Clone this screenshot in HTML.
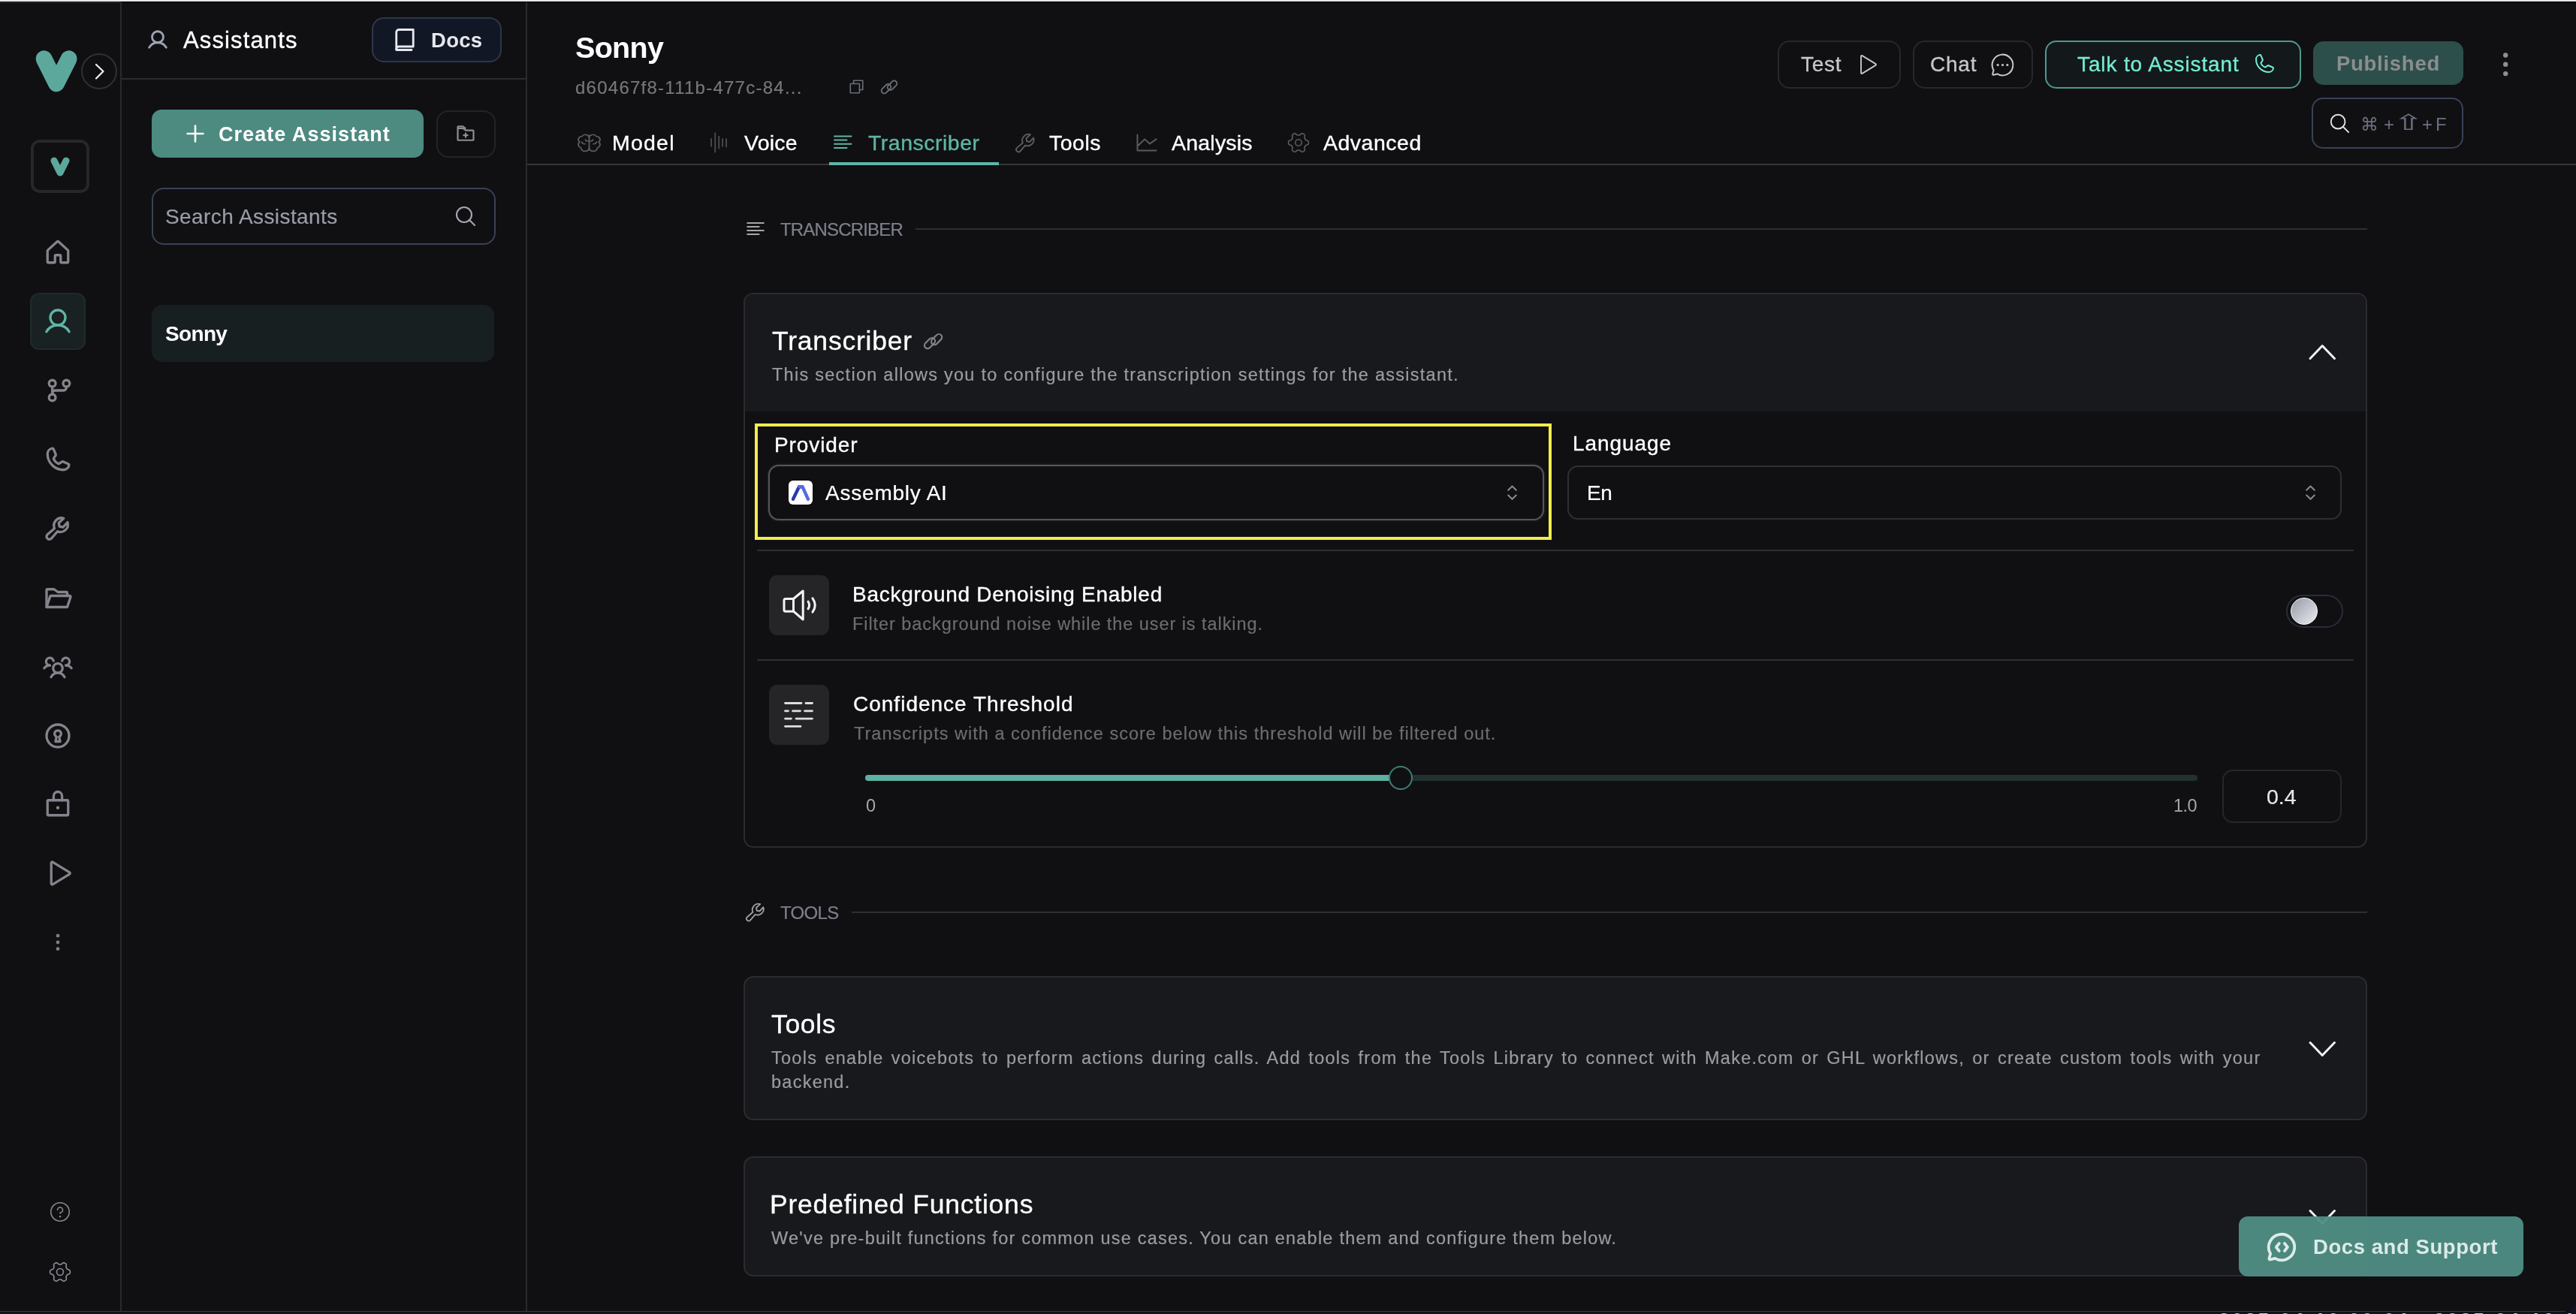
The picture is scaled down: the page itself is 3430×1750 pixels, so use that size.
<!DOCTYPE html>
<html lang="en">
<head>
<meta charset="utf-8">
<title>Sonny - Assistants</title>
<style>
*{box-sizing:border-box;margin:0;padding:0}
html,body{width:3430px;height:1750px;overflow:hidden;background:#101013}
body{position:relative;font-family:"Liberation Sans","DejaVu Sans",sans-serif;color:#fff;-webkit-font-smoothing:antialiased}
.abs{position:absolute}
.t{position:absolute;white-space:nowrap;line-height:1;will-change:transform}
.ic{position:absolute;fill:none;stroke:currentColor;stroke-width:16;stroke-linecap:round;stroke-linejoin:round;overflow:visible}
.ln{position:absolute;background:#29292d}
.card{position:absolute;border:2px solid #2c2c30;border-radius:13px;background:#18191c;overflow:hidden}
</style>
</head>
<body>
<!-- window top edge -->
<div class="abs" style="left:0;top:0;width:3430px;height:2px;background:#e6e8e5"></div>
<div class="abs" style="left:162px;top:2px;width:3268px;height:1px;background:#020203"></div>
<div class="abs" style="left:0;top:2px;width:160px;height:1px;background:#1e1e20"></div>
<div class="abs" style="left:0;top:3px;width:160px;height:1px;background:#262628"></div>
<!-- ============ LEFT RAIL ============ -->
<div class="ln" style="left:160px;top:3px;width:2px;height:1744px;background:#2a2a2c"></div>
<!-- logo -->
<svg class="abs" style="left:40px;top:60px" width="70" height="70" viewBox="0 0 70 70"><polyline points="18.6,18.4 35,51.2 51.6,18.4" fill="none" stroke="#5ca89c" stroke-width="22" stroke-linecap="round" stroke-linejoin="round"/></svg>
<div class="abs" style="left:108px;top:71px;width:48px;height:48px;border:2px solid #303034;border-radius:50%"></div>
<svg class="abs" style="left:108px;top:71px" width="48" height="48" viewBox="0 0 48 48"><polyline points="20,15 29.500,24 20,33.500" fill="none" stroke="#f2f2f2" stroke-width="2.200" stroke-linecap="round" stroke-linejoin="round"/></svg>
<!-- org box -->
<div class="abs" style="left:41px;top:186px;width:78px;height:71px;border:4px solid #27272a;border-radius:12px"></div>
<svg class="abs" style="left:60px;top:202px" width="40" height="40" viewBox="0 0 40 40"><polyline points="12,12 20,28 28,12" fill="none" stroke="#5ca89c" stroke-width="9" stroke-linecap="round" stroke-linejoin="round"/></svg>
<!-- active item bg -->
<div class="abs" style="left:40px;top:390px;width:74px;height:76px;border:2px solid #1f2b2a;border-radius:12px;background:#192122"></div>
<!-- nav icons: 40px, center x=77 -->
<svg class="ic" style="left:57px;top:316px;color:#84848c;stroke-width:21" width="40" height="40" viewBox="0 0 256 256"><path d="M152,208V160a8,8,0,0,0-8-8H112a8,8,0,0,0-8,8v48a8,8,0,0,1-8,8H48a8,8,0,0,1-8-8V115.500a8.300,8.300,0,0,1,2.600-5.900l80-72.700a8,8,0,0,1,10.800,0l80,72.700a8.300,8.300,0,0,1,2.600,5.900V208a8,8,0,0,1-8,8H160A8,8,0,0,1,152,208Z"/></svg>
<svg class="ic" style="left:57px;top:408px;color:#5fb5a6;stroke-width:21" width="40" height="40" viewBox="0 0 256 256"><circle cx="128" cy="96" r="64"/><path d="M31,216a112,112,0,0,1,194,0"/></svg>
<svg class="ic" style="left:59px;top:500px;color:#84848c;stroke-width:21" width="40" height="40" viewBox="0 0 256 256"><circle cx="68" cy="188" r="28"/><circle cx="68" cy="68" r="28"/><circle cx="188" cy="68" r="28"/><path d="M68,160v-8a24,24,0,0,1,24-24h72a24,24,0,0,0,24-24V96"/><line x1="68" y1="96" x2="68" y2="160"/></svg>
<svg class="ic" style="left:57px;top:592px;color:#84848c;stroke-width:21" width="40" height="40" viewBox="0 0 256 256"><path d="M92.500,124.800a83.600,83.600,0,0,0,39,38.900,8,8,0,0,0,7.900-.600l25-16.700a7.900,7.900,0,0,1,7.600-.700l46.800,20.100a7.900,7.900,0,0,1,4.800,8.300A48,48,0,0,1,176,216,136,136,0,0,1,40,80,48,48,0,0,1,81.900,32.400a7.900,7.900,0,0,1,8.300,4.800l20.100,46.900a8,8,0,0,1-.600,7.500L93,117A8,8,0,0,0,92.500,124.800Z"/></svg>
<svg class="ic" style="left:57px;top:684px;color:#84848c;stroke-width:21" width="40" height="40" viewBox="0 0 256 256"><path d="M210.900,73.600a64,64,0,0,1-85.900,78.300L72,213.300a24,24,0,0,1-33.900-33.900l61.400-53a64,64,0,0,1,78.300-85.900L136,80l5.700,30.300L172,116Z"/></svg>
<svg class="ic" style="left:57px;top:776px;color:#84848c;stroke-width:21" width="40" height="40" viewBox="0 0 256 256"><path d="M32,208V64a8,8,0,0,1,8-8H93.300a8,8,0,0,1,4.800,1.600l27.800,20.800a8,8,0,0,0,4.800,1.600H200a8,8,0,0,1,8,8v24"/><path d="M32,208l30.200-90.500a8,8,0,0,1,7.600-5.500H228.900a8,8,0,0,1,7.600,10.500L208,208Z"/></svg>
<svg class="ic" style="left:57px;top:868px;color:#84848c;stroke-width:21" width="40" height="40" viewBox="0 0 256 256"><circle cx="128" cy="140" r="40"/><path d="M196,116a59.800,59.800,0,0,1,48,24"/><path d="M12,140a59.800,59.800,0,0,1,48-24"/><path d="M70.400,216a64.100,64.100,0,0,1,115.200,0"/><path d="M60,116A32,32,0,1,1,91.400,78"/><path d="M164.600,78A32,32,0,1,1,196,116"/></svg>
<svg class="ic" style="left:57px;top:960px;color:#84848c;stroke-width:21" width="40" height="40" viewBox="0 0 256 256"><circle cx="128" cy="128" r="96"/><path d="M139,136a28,28,0,1,0-22,0L108,176h40Z"/></svg>
<svg class="ic" style="left:57px;top:1052px;color:#84848c;stroke-width:21" width="40" height="40" viewBox="0 0 256 256"><rect x="40" y="88" width="176" height="128" rx="8"/><path d="M92,88V52a36,36,0,0,1,72,0V88"/><circle cx="128" cy="152" r="14" fill="currentColor" stroke="none"/></svg>
<svg class="ic" style="left:57px;top:1143px;color:#84848c;stroke-width:21" width="40" height="40" viewBox="0 0 256 256"><path d="M228.100,121.200,84.200,33.200A8,8,0,0,0,72,40V216a8,8,0,0,0,12.200,6.800l143.900-88A7.900,7.900,0,0,0,228.100,121.200Z"/></svg>
<svg class="abs" style="left:67px;top:1235px" width="20" height="40" viewBox="0 0 20 40"><circle cx="10" cy="11.200" r="2.400" fill="#7c7c84"/><circle cx="10" cy="20" r="2.400" fill="#7c7c84"/><circle cx="10" cy="28.700" r="2.400" fill="#7c7c84"/></svg>
<!-- help / settings -->
<svg class="ic" style="left:66px;top:1600px;color:#8a8a92;stroke-width:14" width="28" height="28" viewBox="0 0 256 256"><circle cx="128" cy="128" r="112"/><circle cx="128" cy="184" r="11" fill="currentColor" stroke="none"/><path d="M128,146v-8a32,32,0,1,0-32-32"/></svg>
<svg class="ic" style="left:65px;top:1679px;color:#8a8a92;stroke-width:14" width="30" height="30" viewBox="0 0 256 256"><circle cx="128" cy="128" r="38"/><path d="M128.0,42.0L133.6,42.2L139.2,42.7L145.8,38.3L153.9,31.4L162.9,25.2L171.6,22.7L178.4,25.8L185.0,29.3L191.3,33.2L197.4,37.6L199.6,46.4L198.7,57.3L196.7,67.7L196.2,75.6L199.5,80.2L202.5,85.0L205.1,90.0L207.5,95.1L214.6,98.6L224.6,102.1L234.5,106.8L241.0,113.1L241.8,120.5L242.0,128.0L241.8,135.5L241.0,142.9L234.5,149.2L224.6,153.9L214.6,157.4L207.5,160.9L205.1,166.0L202.5,171.0L199.5,175.8L196.2,180.4L196.7,188.3L198.7,198.7L199.6,209.6L197.4,218.4L191.3,222.8L185.0,226.7L178.4,230.2L171.6,233.3L162.9,230.8L153.9,224.6L145.8,217.7L139.2,213.3L133.6,213.8L128.0,214.0L122.4,213.8L116.8,213.3L110.2,217.7L102.1,224.6L93.1,230.8L84.4,233.3L77.6,230.2L71.0,226.7L64.7,222.8L58.6,218.4L56.4,209.6L57.3,198.7L59.3,188.3L59.8,180.4L56.5,175.8L53.5,171.0L50.9,166.0L48.5,160.9L41.4,157.4L31.4,153.9L21.5,149.2L15.0,142.9L14.2,135.5L14.0,128.0L14.2,120.5L15.0,113.1L21.5,106.8L31.4,102.1L41.4,98.6L48.5,95.1L50.9,90.0L53.5,85.0L56.5,80.2L59.8,75.6L59.3,67.7L57.3,57.3L56.4,46.4L58.6,37.6L64.7,33.2L71.0,29.3L77.6,25.8L84.4,22.7L93.1,25.2L102.1,31.4L110.2,38.3L116.8,42.7L122.4,42.2Z"/></svg>
<!-- ============ ASSISTANTS PANEL ============ -->
<div class="ln" style="left:700px;top:3px;width:2px;height:1744px;background:#2a2a2c"></div>
<div class="ln" style="left:162px;top:104px;width:538px;height:2px;background:#2c2c30"></div>
<svg class="ic" style="left:195px;top:38px;color:#9da3b2;stroke-width:24" width="30" height="30" viewBox="0 0 256 256"><circle cx="128" cy="96" r="64"/><path d="M31,216a112,112,0,0,1,194,0"/></svg>
<!-- Docs button -->
<div class="abs" style="left:495px;top:23px;width:173px;height:60px;border:2px solid #2e364a;border-radius:16px;background:#121726"></div>
<svg class="ic" style="left:521px;top:35px;color:#e6e8ee;stroke-width:20" width="36" height="36" viewBox="0 0 256 256"><path d="M48,216a24,24,0,0,1,24-24H208V32H72A24,24,0,0,0,48,56Z"/><path d="M48,216v8H192"/></svg>
<!-- Create Assistant -->
<div class="abs" style="left:202px;top:146px;width:362px;height:64px;border-radius:13px;background:#4d8a80"></div>
<svg class="abs" style="left:246px;top:164px" width="28" height="28" viewBox="0 0 28 28"><path d="M14,3.600V24.400M3.600,14H24.400" fill="none" stroke="#fff" stroke-width="2.600" stroke-linecap="round"/></svg>
<!-- folder plus btn -->
<div class="abs" style="left:580.500px;top:146.500px;width:79px;height:63px;border:2px solid #242427;border-radius:16px"></div>
<svg class="ic" style="left:606px;top:164px;color:#8e8e90;stroke-width:20" width="28" height="28" viewBox="0 0 256 256"><path d="M216,88H130.700a8,8,0,0,1-4.800-1.600L98.100,65.600A8,8,0,0,0,93.300,64H40a8,8,0,0,0-8,8V200a8,8,0,0,0,8,8H216a8,8,0,0,0,8-8V96A8,8,0,0,0,216,88Z"/><path d="M32,64V48a8,8,0,0,1,8-8H93a8,8,0,0,1,4.800,1.600L124,62"/><line x1="104" y1="148" x2="152" y2="148"/><line x1="128" y1="124" x2="128" y2="172"/></svg>
<!-- Search -->
<div class="abs" style="left:202px;top:250px;width:458px;height:76px;border:2px solid #3a4155;border-radius:16px;background:#101013"></div>
<svg class="ic" style="left:604px;top:272px;color:#a4a7b2;stroke-width:17" width="32" height="32" viewBox="0 0 256 256"><circle cx="112" cy="112" r="80"/><line x1="168.600" y1="168.600" x2="224" y2="224"/></svg>
<!-- Sonny item -->
<div class="abs" style="left:202px;top:406px;width:456px;height:76px;border-radius:14px;background:#181f21"></div>
<!-- ============ MAIN HEADER ============ -->
<div class="ln" style="left:702px;top:218px;width:2728px;height:2px;background:#363639"></div>
<!-- copy + link icons -->
<svg class="ic" style="left:1128.600px;top:104.400px;color:#6a6e78;stroke-width:18" width="23" height="23" viewBox="0 0 256 256"><rect x="36" y="84" width="136" height="136" rx="6"/><path d="M84,84V36H220V172H172"/></svg>
<svg class="abs" style="left:1172px;top:104px" width="24" height="24" viewBox="0 0 24 24"><g fill="none" stroke="#6a6e78" stroke-width="1.9"><rect x="-7.300" y="-3.700" width="14.600" height="7.400" rx="3.700" transform="translate(7.970,14.250) rotate(-45)"/><rect x="-7.300" y="-3.700" width="14.600" height="7.400" rx="3.700" transform="translate(16.030,9.750) rotate(-45)"/></g></svg>
<!-- tab icons -->
<svg class="ic" style="left:766.500px;top:175.500px;color:#5a5a60;stroke-width:14" width="35" height="28" viewBox="0 0 256 256" preserveAspectRatio="none"><path d="M128,40V216"/><path d="M128,64a36,36,0,0,0-68-14A40,40,0,0,0,36,120a44,44,0,0,0,12,72,40,40,0,0,0,80,0"/><path d="M128,64a36,36,0,0,1,68-14,40,40,0,0,1,24,70,44,44,0,0,1-12,72,40,40,0,0,1-80,0"/><path d="M88,144a32,32,0,0,1-32-24"/><path d="M168,144a32,32,0,0,0,32-24"/><path d="M92,92a20,20,0,0,0,36,10"/><path d="M164,92a20,20,0,0,1-36,10"/></svg>
<svg class="abs" style="left:944px;top:175px" width="28" height="30" viewBox="0 0 28 30"><path d="M3,10V19.700M8.200,2.200V27.500M13.300,7V22.600M18.100,10V19.700M23,10V20.500" fill="none" stroke="#4c4c52" stroke-width="1.800" stroke-linecap="round"/></svg>
<svg class="abs" style="left:1108px;top:178px" width="28" height="24" viewBox="0 0 28 24"><path d="M3,3.500H25.500M3,8.500H19.500M3,13.800H25.500M3,19H19.500" fill="none" stroke="#5fb5a6" stroke-width="2" stroke-linecap="round"/></svg>
<svg class="ic" style="left:1348.500px;top:173.500px;color:#5a5a60;stroke-width:15" width="33" height="33" viewBox="0 0 256 256"><path d="M210.900,73.600a64,64,0,0,1-85.900,78.300L72,213.300a24,24,0,0,1-33.900-33.900l61.400-53a64,64,0,0,1,78.300-85.900L136,80l5.700,30.300L172,116Z"/></svg>
<svg class="abs" style="left:1512px;top:176px" width="30" height="28" viewBox="0 0 30 28"><path d="M2.500,3.500V24.500H27.500M3.600,17.800L12.200,9.400L19,15.500L27.500,9.400" fill="none" stroke="#5a5a60" stroke-width="2" stroke-linecap="round" stroke-linejoin="round"/></svg>
<svg class="ic" style="left:1714px;top:175px;color:#5a5a60;stroke-width:14" width="30" height="30" viewBox="0 0 256 256"><circle cx="128" cy="128" r="36"/><path d="M128.0,42.0L133.6,42.2L139.2,42.7L145.8,38.3L153.9,31.4L162.9,25.2L171.6,22.7L178.4,25.8L185.0,29.3L191.3,33.2L197.4,37.6L199.6,46.4L198.7,57.3L196.7,67.7L196.2,75.6L199.5,80.2L202.5,85.0L205.1,90.0L207.5,95.1L214.6,98.6L224.6,102.1L234.5,106.8L241.0,113.1L241.8,120.5L242.0,128.0L241.8,135.5L241.0,142.9L234.5,149.2L224.6,153.9L214.6,157.4L207.5,160.9L205.1,166.0L202.5,171.0L199.5,175.8L196.2,180.4L196.7,188.3L198.7,198.7L199.6,209.6L197.4,218.4L191.3,222.8L185.0,226.7L178.4,230.2L171.6,233.3L162.9,230.8L153.9,224.6L145.8,217.7L139.2,213.3L133.6,213.8L128.0,214.0L122.4,213.8L116.8,213.3L110.2,217.7L102.1,224.6L93.1,230.8L84.4,233.3L77.6,230.2L71.0,226.7L64.7,222.8L58.6,218.4L56.4,209.6L57.3,198.7L59.3,188.3L59.8,180.4L56.5,175.8L53.5,171.0L50.9,166.0L48.5,160.9L41.4,157.4L31.4,153.9L21.5,149.2L15.0,142.9L14.2,135.5L14.0,128.0L14.2,120.5L15.0,113.1L21.5,106.8L31.4,102.1L41.4,98.6L48.5,95.1L50.9,90.0L53.5,85.0L56.5,80.2L59.8,75.6L59.3,67.7L57.3,57.3L56.4,46.4L58.6,37.6L64.7,33.2L71.0,29.3L77.6,25.8L84.4,22.7L93.1,25.2L102.1,31.4L110.2,38.3L116.8,42.7L122.4,42.2Z"/></svg>
<!-- active tab underline -->
<div class="abs" style="left:1104px;top:216px;width:226px;height:4px;background:#5fb5a6"></div>
<!-- right buttons -->
<div class="abs" style="left:2367px;top:54px;width:164px;height:64px;border:2px solid #28282c;border-radius:16px"></div>
<svg class="ic" style="left:2469px;top:70px;color:#c6c6cb;stroke-width:15" width="32" height="32" viewBox="0 0 256 256"><path d="M228.100,121.200,84.200,33.200A8,8,0,0,0,72,40V216a8,8,0,0,0,12.200,6.800l143.900-88A7.900,7.900,0,0,0,228.100,121.200Z"/></svg>
<div class="abs" style="left:2547px;top:54px;width:160px;height:64px;border:2px solid #28282c;border-radius:16px"></div>
<svg class="ic" style="left:2647.500px;top:67.500px;color:#c6c6cb;stroke-width:14" width="37" height="37" viewBox="0 0 256 256"><path d="M45.400,177A95.900,95.900,0,1,1,79,210.600L45.800,220a7.900,7.900,0,0,1-9.800-9.800Z"/><circle cx="128" cy="128" r="11" fill="currentColor" stroke="none"/><circle cx="84" cy="128" r="11" fill="currentColor" stroke="none"/><circle cx="172" cy="128" r="11" fill="currentColor" stroke="none"/></svg>
<div class="abs" style="left:2723px;top:54px;width:341px;height:64px;border:2px solid #4f9a8d;border-radius:15px;background:#13181b"></div>
<svg class="ic" style="left:2999px;top:69px;color:#74ecd2;stroke-width:16" width="32" height="32" viewBox="0 0 256 256"><path d="M92.500,124.800a83.600,83.600,0,0,0,39,38.900,8,8,0,0,0,7.900-.600l25-16.700a7.900,7.900,0,0,1,7.600-.700l46.800,20.100a7.900,7.900,0,0,1,4.800,8.300A48,48,0,0,1,176,216,136,136,0,0,1,40,80,48,48,0,0,1,81.900,32.400a7.900,7.900,0,0,1,8.300,4.800l20.100,46.900a8,8,0,0,1-.600,7.500L93,117A8,8,0,0,0,92.500,124.800Z"/></svg>
<div class="abs" style="left:3080px;top:55px;width:200px;height:58px;border-radius:14px;background:#2d4f4c"></div>
<svg class="abs" style="left:3326px;top:66px" width="20" height="40" viewBox="0 0 20 40"><circle cx="10.200" cy="7.500" r="3.200" fill="#8f8f92"/><circle cx="10.200" cy="19.700" r="3.200" fill="#8f8f92"/><circle cx="10.200" cy="32.100" r="3.200" fill="#8f8f92"/></svg>
<div class="abs" style="left:3078px;top:130px;width:202px;height:68px;border:2px solid #394157;border-radius:15px"></div>
<svg class="ic" style="left:3100px;top:149px;color:#e4e4e8;stroke-width:16" width="30" height="30" viewBox="0 0 256 256"><circle cx="112" cy="112" r="80"/><line x1="168.600" y1="168.600" x2="232" y2="232"/></svg>
<!-- ============ CONTENT ============ -->
<!-- section label TRANSCRIBER -->
<svg class="abs" style="left:993px;top:294px" width="26" height="22" viewBox="0 0 26 22"><path d="M2.200,3H23.800M2.200,8H17.600M2.200,13H23.800M2.200,18H17.600" fill="none" stroke="#a6a6a8" stroke-width="2" stroke-linecap="round"/></svg>
<div class="ln" style="left:1219px;top:304px;width:1933px;height:2px;background:#2f2f33"></div>

<!-- Transcriber card -->
<div class="card" style="left:990px;top:390px;width:2162px;height:739px;background:#101013">
  <div class="abs" style="left:0;top:0;width:2160px;height:156px;background:#18191c"></div>
</div>
<svg class="abs" style="left:1229.3px;top:440.8px" width="27.2" height="27.2" viewBox="0 0 24 24"><g fill="none" stroke="#858588" stroke-width="1.9"><rect x="-7.300" y="-3.700" width="14.600" height="7.400" rx="3.700" transform="translate(7.970,14.250) rotate(-45)"/><rect x="-7.300" y="-3.700" width="14.600" height="7.400" rx="3.700" transform="translate(16.030,9.750) rotate(-45)"/></g></svg>
<svg class="abs" style="left:3072px;top:456px" width="40" height="26" viewBox="0 0 40 26"><polyline points="4,21.500 20.200,4.500 36.500,21.500" fill="none" stroke="#f0f0f0" stroke-width="3" stroke-linecap="round" stroke-linejoin="round"/></svg>

<!-- highlight box -->
<div class="abs" style="left:1005px;top:564px;width:1060.500px;height:155px;border:4.500px solid #f4ec4c"></div>
<!-- provider select -->
<div class="abs" style="left:1023px;top:619px;width:1033px;height:74px;border:2.500px solid #55555c;border-radius:14px;box-shadow:0 0 0 1.500px #1d1d21"></div>
<div class="abs" style="left:1050px;top:640px;width:32px;height:32px;border-radius:6px;background:#fff"></div>
<svg class="abs" style="left:1050px;top:640px" width="32" height="32" viewBox="0 0 32 32"><path d="M6,24.800L14,8.200H18" fill="none" stroke="#2b3ba8" stroke-width="4.400" stroke-linecap="round" stroke-linejoin="round"/><path d="M14.500,8.200H18.500L26,24.800" fill="none" stroke="#566ae2" stroke-width="4.400" stroke-linecap="round" stroke-linejoin="round"/></svg>
<svg class="abs" style="left:2004px;top:642px" width="18" height="28" viewBox="0 0 18 28"><path d="M4.200,10.800L9.500,5.500L14.800,10.800M4.200,17.500L9.500,22.800L14.800,17.500" fill="none" stroke="#8a8a8c" stroke-width="2" stroke-linecap="round" stroke-linejoin="round"/></svg>
<!-- language select -->
<div class="abs" style="left:2087px;top:620px;width:1031px;height:72px;border:2px solid #2f2f33;border-radius:14px"></div>
<svg class="abs" style="left:3067px;top:642px" width="18" height="28" viewBox="0 0 18 28"><path d="M4.200,10.800L9.500,5.500L14.800,10.800M4.200,17.500L9.500,22.800L14.800,17.500" fill="none" stroke="#8a8a8c" stroke-width="2" stroke-linecap="round" stroke-linejoin="round"/></svg>

<div class="ln" style="left:1008px;top:732px;width:2126px;height:2px;background:#2f2f33"></div>
<!-- row: background denoising -->
<div class="abs" style="left:1024px;top:766px;width:80px;height:80px;border-radius:11px;background:#252527"></div>
<svg class="abs" style="left:1024px;top:766px" width="80" height="80" viewBox="0 0 80 80"><g fill="none" stroke="#f4f4f4" stroke-width="3" stroke-linecap="round" stroke-linejoin="round"><path d="M45.200,21V59L32.500,48.200H22a2,2,0,0,1-2-2V33.500a2,2,0,0,1,2-2H32.500Z"/><path d="M32.500,31.500V48.200"/><path d="M52,35.200Q55.200,40 52,44.800"/><path d="M58,30.800Q64.500,40 58,49.200"/></g></svg>
<!-- toggle -->
<div class="abs" style="left:3044px;top:792px;width:76px;height:44px;border:2px solid #282d3b;border-radius:22px;background:#101013"></div>
<div class="abs" style="left:3050px;top:796px;width:36px;height:36px;border-radius:50%;background:linear-gradient(135deg,#9ea2ac 10%,#e6e8ec 95%);border:1.500px solid #fff"></div>

<div class="ln" style="left:1008px;top:878px;width:2126px;height:2px;background:#2f2f33"></div>
<!-- row: confidence threshold -->
<div class="abs" style="left:1024px;top:912px;width:80px;height:80px;border-radius:11px;background:#252527"></div>
<svg class="abs" style="left:1024px;top:912px" width="80" height="80" viewBox="0 0 80 80"><path d="M21.500,24.500H43M49,24.500H57.500M21.500,34.800H25.500M31.500,34.800H41.500M47.500,34.800H57.500M21.500,45.100H29.500M36,45.100H57.500M21.500,55.400H42" fill="none" stroke="#dedede" stroke-width="2.800" stroke-linecap="round"/></svg>
<!-- slider -->
<div class="abs" style="left:1152px;top:1032px;width:1774px;height:8px;border-radius:4px;background:#203230"></div>
<div class="abs" style="left:1152px;top:1032px;width:713px;height:8px;border-radius:4px 0 0 4px;background:#5fb0a2"></div>
<div class="abs" style="left:1849px;top:1020px;width:32px;height:32px;border-radius:50%;border:2px solid #3f7f76;background:#101013"></div>
<!-- value box -->
<div class="abs" style="left:2958.500px;top:1024.500px;width:159px;height:71px;border:2px solid #262629;border-radius:14px"></div>

<!-- section label TOOLS -->
<svg class="ic" style="left:990px;top:1198.500px;color:#9c9c9e;stroke-width:15" width="32" height="32" viewBox="0 0 256 256"><path d="M210.900,73.600a64,64,0,0,1-85.900,78.300L72,213.300a24,24,0,0,1-33.900-33.900l61.400-53a64,64,0,0,1,78.300-85.900L136,80l5.700,30.300L172,116Z"/></svg>
<div class="ln" style="left:1134px;top:1214px;width:2018px;height:2px;background:#2f2f33"></div>

<!-- Tools card -->
<div class="card" style="left:990px;top:1300px;width:2162px;height:191.500px"></div>
<svg class="abs" style="left:3072px;top:1384px" width="40" height="26" viewBox="0 0 40 26"><polyline points="4,4.500 20.200,21.500 36.500,4.500" fill="none" stroke="#f0f0f0" stroke-width="3" stroke-linecap="round" stroke-linejoin="round"/></svg>
<!-- Predefined Functions card -->
<div class="card" style="left:990px;top:1540px;width:2162px;height:160px"></div>
<svg class="abs" style="left:3072px;top:1608px" width="40" height="26" viewBox="0 0 40 26"><polyline points="4,4.500 20.200,21.500 36.500,4.500" fill="none" stroke="#f0f0f0" stroke-width="3" stroke-linecap="round" stroke-linejoin="round"/></svg>

<!-- Docs and Support floating button -->
<div class="abs" style="left:2981px;top:1620px;width:379px;height:80px;border-radius:12px;background:rgba(79,142,132,0.950)"></div>
<svg class="ic" style="left:3015px;top:1638px;color:#dcebe8;stroke-width:21" width="46" height="46" viewBox="0 0 256 256"><path d="M45.400,177A95.900,95.900,0,1,1,79,210.600L45.800,220a7.900,7.900,0,0,1-9.800-9.800Z"/><polyline points="110,100 88,128 110,156"/><polyline points="150,100 172,128 150,156"/></svg>

<!-- bottom edge -->
<div class="abs" style="left:0;top:1746px;width:3416px;height:1px;background:#3a3a3e"></div>
<div class="abs" style="left:0;top:1747.500px;width:3430px;height:3px;background:#0e1420"></div>
<div class="abs" style="left:3396px;top:1714px;width:34px;height:34px;border-bottom-right-radius:17px;box-shadow:8px 8px 0 8px #0e1420"></div>
<!-- ============ TEXT ============ -->
<span class="t" id="t1" style="left:243.8px;top:38.3px;font-size:31px;font-weight:400;color:#ffffff;letter-spacing:1.135px;-webkit-text-stroke:0.35px currentColor">Assistants</span>
<span class="t" id="t2" style="left:573.8px;top:39.6px;font-size:27.5px;font-weight:700;color:#e6e8ee;letter-spacing:0.283px">Docs</span>
<span class="t" id="t3" style="left:290.8px;top:166.1px;font-size:27px;font-weight:700;color:#ffffff;letter-spacing:1.047px">Create Assistant</span>
<span class="t" id="t4" style="left:220.3px;top:274.5px;font-size:28px;font-weight:400;color:#9a9da9;letter-spacing:0.421px;-webkit-text-stroke:0.2px currentColor">Search Assistants</span>
<span class="t" id="t5" style="left:220.3px;top:430.9px;font-size:28px;font-weight:700;color:#ffffff;letter-spacing:-0.666px">Sonny</span>
<span class="t" id="t6" style="left:766.3px;top:43.5px;font-size:39.5px;font-weight:700;color:#ffffff;letter-spacing:-0.701px">Sonny</span>
<span class="t" id="t7" style="left:766.3px;top:104.9px;font-size:24px;font-weight:400;color:#77777b;letter-spacing:1.250px;-webkit-text-stroke:0.2px currentColor">d60467f8-111b-477c-84...</span>
<span class="t" id="t8a" style="left:815.0px;top:176.4px;font-size:28.5px;font-weight:400;color:#ffffff;letter-spacing:1.219px;-webkit-text-stroke:0.35px currentColor">Model</span>
<span class="t" id="t8b" style="left:991.1px;top:176.4px;font-size:28.5px;font-weight:400;color:#ffffff;letter-spacing:0.241px;-webkit-text-stroke:0.35px currentColor">Voice</span>
<span class="t" id="t8c" style="left:1156.1px;top:176.4px;font-size:28.5px;font-weight:400;color:#5fb5a6;letter-spacing:0.494px;-webkit-text-stroke:0.35px currentColor">Transcriber</span>
<span class="t" id="t8d" style="left:1397.4px;top:176.4px;font-size:28.5px;font-weight:400;color:#ffffff;letter-spacing:0.488px;-webkit-text-stroke:0.35px currentColor">Tools</span>
<span class="t" id="t8e" style="left:1559.7px;top:176.4px;font-size:28.5px;font-weight:400;color:#ffffff;letter-spacing:0.211px;-webkit-text-stroke:0.35px currentColor">Analysis</span>
<span class="t" id="t8f" style="left:1762.1px;top:176.4px;font-size:28.5px;font-weight:400;color:#ffffff;letter-spacing:0.505px;-webkit-text-stroke:0.35px currentColor">Advanced</span>
<span class="t" id="t9" style="left:1039.3px;top:293.8px;font-size:24px;font-weight:400;color:#7d808b;letter-spacing:-0.823px;-webkit-text-stroke:0.2px currentColor">TRANSCRIBER</span>
<span class="t" id="t10" style="left:1027.6px;top:436.8px;font-size:35.5px;font-weight:400;color:#ffffff;letter-spacing:0.800px;-webkit-text-stroke:0.35px currentColor">Transcriber</span>
<span class="t" id="t11" style="left:1027.6px;top:487.6px;font-size:23.5px;font-weight:400;color:#9c9c9f;letter-spacing:1.264px;-webkit-text-stroke:0.2px currentColor">This section allows you to configure the transcription settings for the assistant.</span>
<span class="t" id="t12" style="left:1031.0px;top:578.5px;font-size:28px;font-weight:400;color:#ffffff;letter-spacing:0.905px;-webkit-text-stroke:0.35px currentColor">Provider</span>
<span class="t" id="t13" style="left:1099.3px;top:642.7px;font-size:28px;font-weight:400;color:#ffffff;letter-spacing:0.784px;-webkit-text-stroke:0.2px currentColor">Assembly AI</span>
<span class="t" id="t14" style="left:2094.3px;top:576.8px;font-size:28px;font-weight:400;color:#ffffff;letter-spacing:0.917px;-webkit-text-stroke:0.35px currentColor">Language</span>
<span class="t" id="t15" style="left:2112.6px;top:643.2px;font-size:28px;font-weight:400;color:#ffffff;letter-spacing:-0.350px;-webkit-text-stroke:0.2px currentColor">En</span>
<span class="t" id="t16" style="left:1135.3px;top:778.0px;font-size:28px;font-weight:400;color:#ffffff;letter-spacing:0.738px;-webkit-text-stroke:0.35px currentColor">Background Denoising Enabled</span>
<span class="t" id="t17" style="left:1135.3px;top:819.5px;font-size:23.5px;font-weight:400;color:#6c6c70;letter-spacing:0.933px;-webkit-text-stroke:0.2px currentColor">Filter background noise while the user is talking.</span>
<span class="t" id="t18" style="left:1136.3px;top:924.2px;font-size:28px;font-weight:400;color:#ffffff;letter-spacing:1.003px;-webkit-text-stroke:0.35px currentColor">Confidence Threshold</span>
<span class="t" id="t19" style="left:1137.3px;top:965.7px;font-size:23.5px;font-weight:400;color:#6c6c70;letter-spacing:1.014px;-webkit-text-stroke:0.2px currentColor">Transcripts with a confidence score below this threshold will be filtered out.</span>
<span class="t" id="t20" style="left:1153.0px;top:1062.1px;font-size:23.5px;font-weight:400;color:#a6a6ac;letter-spacing:0.000px">0</span>
<span class="t" id="t21" style="left:2894.0px;top:1061.8px;font-size:23.5px;font-weight:400;color:#a6a6ac;letter-spacing:-0.586px">1.0</span>
<span class="t" id="t22" style="left:3017.7px;top:1047.0px;font-size:28.5px;font-weight:400;color:#e6e6ea;letter-spacing:-0.062px;-webkit-text-stroke:0.2px currentColor">0.4</span>
<span class="t" id="t23" style="left:1039.4px;top:1203.8px;font-size:24px;font-weight:400;color:#7d808b;letter-spacing:-0.680px;-webkit-text-stroke:0.2px currentColor">TOOLS</span>
<span class="t" id="t24" style="left:1026.9px;top:1346.7px;font-size:35.5px;font-weight:400;color:#ffffff;letter-spacing:0.681px;-webkit-text-stroke:0.35px currentColor">Tools</span>
<span class="t" id="t26" style="left:1024.9px;top:1586.6px;font-size:35.5px;font-weight:400;color:#ffffff;letter-spacing:0.785px;-webkit-text-stroke:0.35px currentColor">Predefined Functions</span>
<span class="t" id="t27" style="left:1026.9px;top:1638.0px;font-size:23.5px;font-weight:400;color:#9c9c9f;letter-spacing:1.222px;-webkit-text-stroke:0.2px currentColor">We&#x27;ve pre-built functions for common use cases. You can enable them and configure them below.</span>
<span class="t" id="t28" style="left:3079.7px;top:1646.6px;font-size:27.5px;font-weight:700;color:#dcebe8;letter-spacing:0.573px">Docs and Support</span>
<span class="t" id="t29" style="left:2398.0px;top:72.1px;font-size:28px;font-weight:400;color:#c6c6cb;letter-spacing:0.714px;-webkit-text-stroke:0.35px currentColor">Test</span>
<span class="t" id="t30" style="left:2570.1px;top:72.1px;font-size:28px;font-weight:400;color:#c6c6cb;letter-spacing:0.781px;-webkit-text-stroke:0.35px currentColor">Chat</span>
<span class="t" id="t31" style="left:2766.0px;top:72.3px;font-size:28px;font-weight:400;color:#74ecd2;letter-spacing:0.877px;-webkit-text-stroke:0.35px currentColor">Talk to Assistant</span>
<span class="t" id="t32" style="left:3111.3px;top:71.3px;font-size:27.5px;font-weight:700;color:#8b8e8e;letter-spacing:0.724px">Published</span>
<div class="t" id="t25a" style="left:1027.3px;top:1398.1px;width:1983.5px;font-size:23.5px;color:#9c9c9f;white-space:normal;text-align:justify;text-align-last:justify;-webkit-text-stroke:0.2px currentColor;letter-spacing:1.264px">Tools enable voicebots to perform actions during calls. Add tools from the Tools Library to connect with Make.com or GHL workflows, or create custom tools with your</div>
<span class="t" id="t25b" style="left:1027.3px;top:1430.1px;font-size:23.5px;color:#9c9c9f;-webkit-text-stroke:0.2px currentColor;letter-spacing:1.264px">backend.</span>
<span class="t" id="t33a" style="left:3142.800px;top:153.800px;font-size:24px;color:#6b7080">⌘</span><span class="t" id="t33b" style="left:3173.800px;top:153.800px;font-size:24px;color:#6b7080">+</span><span class="t" id="t33c" style="left:3185.800px;top:150.200px;font-size:28px;color:#6b7080;transform:scale(1.780,1.020);transform-origin:0 50%">⇧</span><span class="t" id="t33d" style="left:3224.800px;top:153.800px;font-size:24px;color:#6b7080">+</span><span class="t" id="t33e" style="left:3242.500px;top:153.800px;font-size:24px;color:#6b7080">F</span>
<span class="t" id="t34" style="left:2954px;top:1744.500px;font-size:26px;font-weight:700;color:#d0d0d0;letter-spacing:3px">2025-04-10 09:04 - 2025-04-10 12:59</span>
</body>
</html>
